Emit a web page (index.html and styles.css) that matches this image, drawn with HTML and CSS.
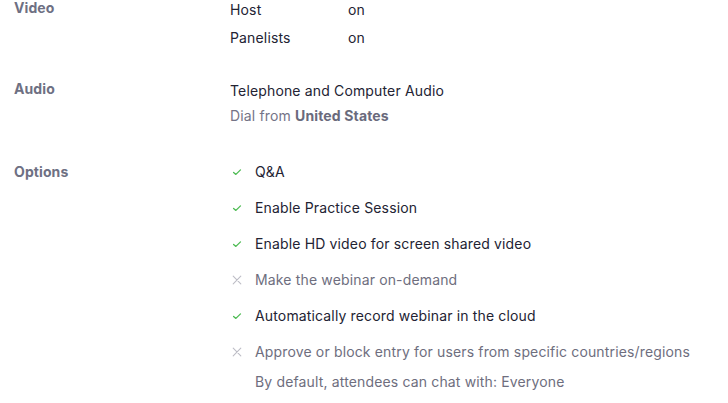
FILE: index.html
```html
<!DOCTYPE html>
<html>
<head>
<meta charset="utf-8">
<link rel="stylesheet" href="styles.css">
</head>
<body>
<div class="page">
  <section class="row row-video">
    <div class="label label-video">Video</div>
    <div class="content">
      <div class="kv"><span class="k">Host</span><span class="v">on</span></div>
      <div class="kv"><span class="k">Panelists</span><span class="v">on</span></div>
    </div>
  </section>
  <section class="row row-audio">
    <div class="label label-audio">Audio</div>
    <div class="content">
      <div class="line">Telephone and Computer Audio</div>
      <div class="line muted">Dial from <b>United States</b></div>
    </div>
  </section>
  <section class="row row-options">
    <div class="label label-options">Options</div>
    <div class="content">
      <div class="opt on"><svg class="ico" viewBox="0 0 10 10"><path d="M1.6 5.4 L3.9 7.4 L8.5 2.9" fill="none" stroke="#4cbb52" stroke-width="1.3" stroke-linecap="round" stroke-linejoin="round"/></svg><span>Q&amp;A</span></div>
      <div class="opt on"><svg class="ico" viewBox="0 0 10 10"><path d="M1.6 5.4 L3.9 7.4 L8.5 2.9" fill="none" stroke="#4cbb52" stroke-width="1.3" stroke-linecap="round" stroke-linejoin="round"/></svg><span>Enable Practice Session</span></div>
      <div class="opt on"><svg class="ico" viewBox="0 0 10 10"><path d="M1.6 5.4 L3.9 7.4 L8.5 2.9" fill="none" stroke="#4cbb52" stroke-width="1.3" stroke-linecap="round" stroke-linejoin="round"/></svg><span>Enable HD video for screen shared video</span></div>
      <div class="opt off"><svg class="ico" viewBox="0 0 10 10"><path d="M1.2 1.2 L8.8 8.8 M8.8 1.2 L1.2 8.8" fill="none" stroke="#bdbdc6" stroke-width="1.1" stroke-linecap="round"/></svg><span>Make the webinar on-demand</span></div>
      <div class="opt on"><svg class="ico" viewBox="0 0 10 10"><path d="M1.6 5.4 L3.9 7.4 L8.5 2.9" fill="none" stroke="#4cbb52" stroke-width="1.3" stroke-linecap="round" stroke-linejoin="round"/></svg><span>Automatically record webinar in the cloud</span></div>
      <div class="opt off"><svg class="ico" viewBox="0 0 10 10"><path d="M1.2 1.2 L8.8 8.8 M8.8 1.2 L1.2 8.8" fill="none" stroke="#bdbdc6" stroke-width="1.1" stroke-linecap="round"/></svg><span>Approve or block entry for users from specific countries/regions</span></div>
      <div class="note">By default, attendees can chat with: Everyone</div>
    </div>
  </section>
</div>
</body>
</html>
```
FILE: styles.css
```css
html, body {
  margin: 0;
  padding: 0;
  background: #ffffff;
}
body {
  font-family: Inter, "Noto Sans", sans-serif;
  font-size: 14px;
  letter-spacing: 0.15px;
  color: #232333;
  overflow: hidden;
}
.page {
  margin-top: -4px;
  padding-left: 14px;
}
.row {
  display: grid;
  grid-template-columns: 216px 1fr;
}
.row-audio { margin-top: 26px; }
.row-options { margin-top: 26px; }
.label {
  font-weight: 700;
  color: #6e7083;
  line-height: 20px;
  letter-spacing: 0.1px;
}
.label-video { line-height: 24px; }
.label-audio { line-height: 21px; }
.label-options { line-height: 36px; }
.kv {
  display: flex;
  line-height: 28px;
}
.k { width: 118px; }
.line { line-height: 25px; }
.muted { color: #747487; }
.muted b { font-weight: 700; color: #6a6a7c; }
.opt {
  display: flex;
  align-items: center;
  line-height: 36px;
}
.opt.off span { color: #6e6e7e; }
.ico {
  width: 10px;
  height: 10px;
  margin-left: 2px;
  margin-right: 13px;
  flex: none;
}
.note {
  line-height: 24px;
  padding-left: 25px;
  color: #6e6e7e;
}
```
